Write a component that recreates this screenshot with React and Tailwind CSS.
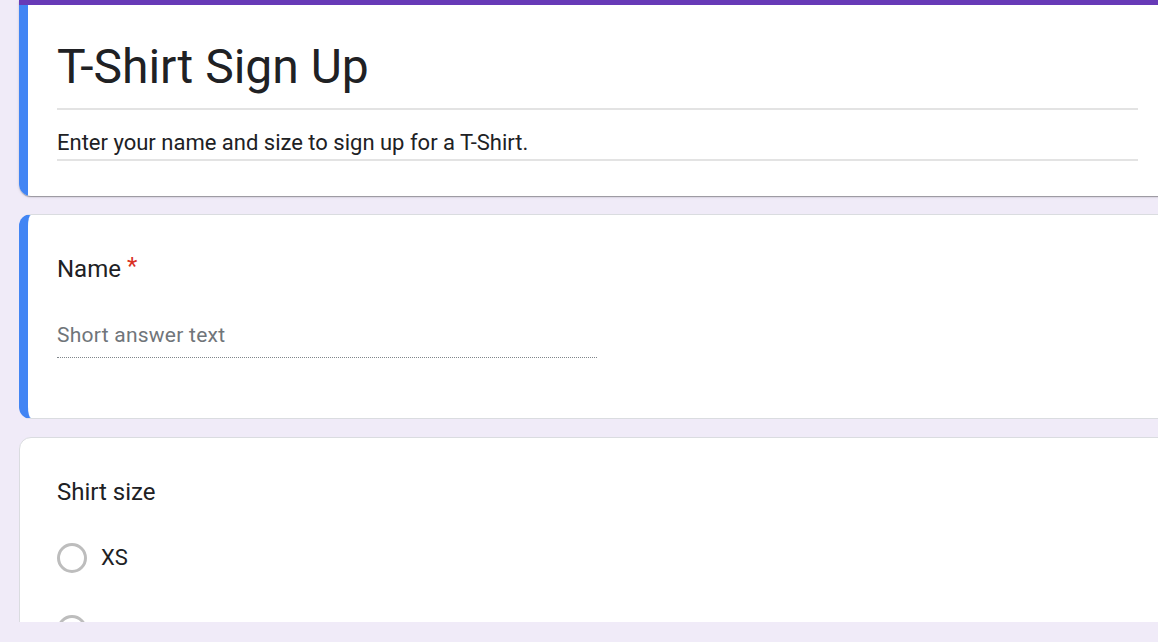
export default function App() {
  return (
    <div className="w-[1158px] h-[642px] bg-[#f0ebf8] overflow-hidden" style={{ fontFamily: 'Roboto, "Liberation Sans", sans-serif' }}>
      <div className="h-[622px] overflow-hidden">
        <div className="ml-[19px] w-[1157px] flex flex-col gap-[18px]">
          {/* Header card */}
          <div className="bg-white rounded-bl-[12px] rounded-br-[12px] overflow-hidden shadow-[0_2px_1px_-1px_rgba(0,0,0,0.2),0_1px_1px_0_rgba(0,0,0,0.14),0_1px_3px_0_rgba(0,0,0,0.12)]">
            <div className="h-[5px] bg-[#673ab7]" />
            <div className="border-l-[9px] border-[#4285f4] pl-[29px] pr-[38px] pt-[32px] pb-[35px]">
              <div className="border-b-2 border-[#e3e3e3] pb-[11px]">
                <h1 className="text-[48px] leading-[60px] text-[#202124] font-normal">T-Shirt Sign Up</h1>
              </div>
              <div className="mt-[18px] border-b-2 border-[#e3e3e3] pb-[1px]">
                <p className="text-[22px] leading-[30px] text-[#202124]">Enter your name and size to sign up for a T-Shirt.</p>
              </div>
            </div>
          </div>

          {/* Name card */}
          <div className="bg-white rounded-[12px] border border-[#dadce0] border-l-[9px] border-l-[#4285f4] pl-[29px] pt-[38px] pb-[60px]">
            <div className="flex items-start text-[24px] leading-[32px] text-[#202124]">
              <span>Name</span>
              <span className="text-[#d93025] ml-[6px] text-[24px] leading-[26px]">*</span>
            </div>
            <div className="mt-[35px] w-[540px] border-b border-dotted border-[#80868b] pb-[7px]">
              <span className="text-[21px] leading-[30px] tracking-[0.25px] text-[#70757a]">Short answer text</span>
            </div>
          </div>

          {/* Shirt size card */}
          <div className="bg-white rounded-[12px] border border-[#dadce0] pl-[37px] pt-[38px] pb-[40px]">
            <div className="text-[24px] leading-[32px] text-[#202124]">Shirt size</div>
            <div className="mt-[14px] flex flex-col">
              <div className="h-[72px] flex items-center">
                <div className="w-[30px] h-[30px] rounded-full border-[3px] border-[#bdbdbd]" />
                <span className="ml-[14px] text-[22px] leading-[30px] text-[#202124]">XS</span>
              </div>
              <div className="h-[72px] flex items-center">
                <div className="w-[30px] h-[30px] rounded-full border-[3px] border-[#bdbdbd]" />
              </div>
            </div>
          </div>
        </div>
      </div>
    </div>
  );
}
